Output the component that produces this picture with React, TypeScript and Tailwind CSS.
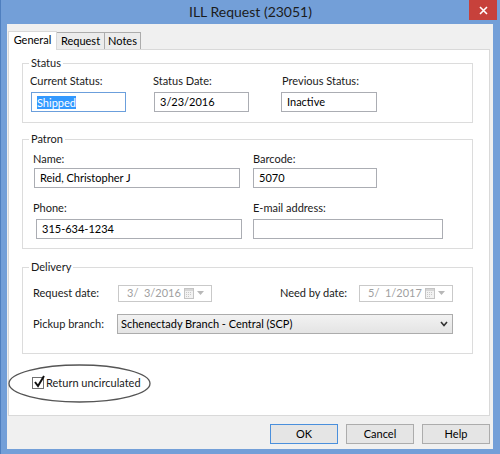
import React from "react";

const font = { fontFamily: 'Lato, "Noto Sans", sans-serif' };

function GroupBox({
  title,
  className,
  children,
}: {
  title: string;
  className: string;
  children: React.ReactNode;
}) {
  return (
    <div className={`relative border border-[#dcdcdc] ${className}`}>
      {/* legend sits over the top border */}
      <span className="absolute -top-[8px] left-[6px] bg-white px-[2px] text-[11px] leading-[14px] text-[#1a1a1a]">
        {title}
      </span>
      {children}
    </div>
  );
}

function TextBox({
  value,
  className,
  focused,
}: {
  value: string;
  className: string;
  focused?: boolean;
}) {
  return (
    <div
      className={`flex h-[20px] items-center border bg-white pl-[5px] text-[11px] text-black ${
        focused ? "border-[#6b9fdc]" : "border-[#abadb3]"
      } ${className}`}
    >
      {focused ? (
        <span className="bg-[#3399ff] leading-[13px] text-white">{value}</span>
      ) : (
        value
      )}
    </div>
  );
}

function DateBox({ value }: { value: string }) {
  return (
    <div className="flex h-[17px] w-[94px] items-center border border-[#c9c9c9] bg-white pl-[8px] pr-[7px] text-[11px] text-[#a0a0a0]">
      <span className="flex-1 whitespace-pre">{value}</span>
      <svg width="10" height="11" viewBox="0 0 10 11">
        <rect x="0.5" y="0.5" width="9" height="10" fill="#f2f2f2" stroke="#c4c4c4" />
        <rect x="1" y="1" width="8" height="2" fill="#d6d6d6" />
        <g fill="#c8c8c8">
          <rect x="2" y="4" width="1" height="1" />
          <rect x="4" y="4" width="1" height="1" />
          <rect x="6" y="4" width="1" height="1" />
          <rect x="2" y="6" width="1" height="1" />
          <rect x="4" y="6" width="1" height="1" />
          <rect x="6" y="6" width="1" height="1" />
          <rect x="2" y="8" width="1" height="1" />
          <rect x="4" y="8" width="1" height="1" />
        </g>
      </svg>
      <svg width="7" height="4" viewBox="0 0 7 4" className="ml-[3px]">
        <path d="M0 0 H7 L3.5 4 Z" fill="#b8b8b8" />
      </svg>
    </div>
  );
}

function Button({ label, primary }: { label: string; primary?: boolean }) {
  return (
    <div
      className={`flex h-[20px] w-[68px] items-center justify-center border bg-[#e5e5e5] text-[11px] text-black ${
        primary ? "border-[#4a8fdc]" : "border-[#acacac]"
      }`}
    >
      {label}
    </div>
  );
}

export default function App() {
  return (
    <div
      className="flex h-[454px] w-[500px] flex-col border-l border-[#4f7fbf] bg-[#739fd8]"
      style={font}
    >
      {/* title bar */}
      <div className="relative flex h-[24px] shrink-0 items-center justify-center">
        <span className="text-[14px] leading-[18px] text-[#1c1c1c]">
          ILL Request (23051)
        </span>
        <div className="absolute right-[3px] top-0 flex h-[20px] w-[28px] items-center justify-center bg-[#c7413b]">
          <svg width="9" height="9" viewBox="0 0 9 9">
            <path d="M1 1 L8 8 M8 1 L1 8" stroke="#fff" strokeWidth="1.6" />
          </svg>
        </div>
      </div>

      {/* dialog body */}
      <div className="ml-[6px] mr-[7px] flex h-[425px] shrink-0 flex-col bg-[#f0f0f0] pl-[1px] pr-[3px] pt-[7px]">
        {/* tabs */}
        <div className="flex h-[18px] items-end text-[11px] text-black">
          <div className="relative z-10 -mb-px flex h-[19px] w-[49px] items-center justify-center border border-b-0 border-[#d9d9d9] bg-white pb-[1px]">
            General
          </div>
          <div className="flex h-[17px] w-[48px] items-center justify-center border border-l-0 border-b-0 border-[#acacac] bg-[#ececec]">
            Request
          </div>
          <div className="flex h-[17px] w-[36px] items-center justify-center border border-l-0 border-b-0 border-[#acacac] bg-[#ececec]">
            Notes
          </div>
        </div>

        {/* tab panel */}
        <div className="flex h-[367px] flex-col border border-[#d9d9d9] bg-white pl-[13px] pr-[16px] pt-[13px]">
          {/* Status */}
          <GroupBox title="Status" className="h-[60px] pl-[7px] pt-[10px]">
            <div className="flex text-[11px] leading-[14px] text-[#1a1a1a]">
              <div className="w-[123px]">
                <div>Current Status:</div>
                <TextBox value="Shipped" focused className="ml-[1px] mt-[4px] w-[95px]" />
              </div>
              <div className="w-[129px]">
                <div>Status Date:</div>
                <TextBox value="3/23/2016" className="ml-[1px] mt-[4px] w-[95px]" />
              </div>
              <div>
                <div>Previous Status:</div>
                <TextBox value="Inactive" className="ml-[-1px] mt-[4px] w-[96px]" />
              </div>
            </div>
          </GroupBox>

          {/* Patron */}
          <GroupBox title="Patron" className="mt-[16px] h-[110px] pl-[10px] pt-[12px]">
            <div className="flex text-[11px] leading-[14px] text-[#1a1a1a]">
              <div className="w-[220px]">
                <div>Name:</div>
                <TextBox value="Reid, Christopher J" className="ml-[1px] mt-[2px] w-[206px]" />
                <div className="mt-[13px]">Phone:</div>
                <TextBox value="315-634-1234" className="ml-[3px] mt-[4px] w-[206px]" />
              </div>
              <div>
                <div>Barcode:</div>
                <TextBox value="5070" className="mt-[2px] w-[124px]" />
                <div className="mt-[13px]">E-mail address:</div>
                <TextBox value="" className="mt-[4px] w-[190px]" />
              </div>
            </div>
          </GroupBox>

          {/* Delivery */}
          <GroupBox title="Delivery" className="mt-[18px] h-[87px] pl-[10px] pt-[15px]">
            <div className="flex h-[20px] items-center text-[11px] text-[#1a1a1a]">
              <div className="w-[85px]">Request date:</div>
              <DateBox value="3/  3/2016" />
              <div className="ml-[68px] w-[79px]">Need by date:</div>
              <DateBox value="5/  1/2017" />
            </div>
            <div className="mt-[11px] flex h-[20px] items-center text-[11px] text-[#1a1a1a]">
              <div className="w-[84px]">Pickup branch:</div>
              <div className="flex h-[20px] w-[336px] items-center border border-[#acacac] bg-gradient-to-b from-[#f2f2f2] to-[#e4e4e4] pl-[3px] pr-[4px] text-black">
                <span className="flex-1">Schenectady Branch - Central (SCP)</span>
                <svg width="8" height="6" viewBox="0 0 8 6">
                  <path d="M1 1 L4 4.5 L7 1" fill="none" stroke="#333" strokeWidth="1.6" />
                </svg>
              </div>
            </div>
          </GroupBox>

          {/* Return uncirculated */}
          <div className="relative mt-[10px] flex h-[38px] items-center pl-[10px] text-[11px] text-[#1a1a1a]">
            <svg
              className="absolute left-[-14px] top-0"
              width="143"
              height="39"
              viewBox="0 0 143 39"
            >
              <ellipse cx="71.5" cy="19.5" rx="70.5" ry="18.5" fill="none" stroke="#555" strokeWidth="1.3" />
            </svg>
            <div className="relative flex h-[12px] w-[12px] items-center justify-center border border-[#707070] bg-white">
              <svg
                className="absolute -top-[3px] left-[0px]"
                width="12"
                height="13"
                viewBox="0 0 12 13"
              >
                <path d="M2 7 L5 11 L11 1" fill="none" stroke="#111" strokeWidth="2" />
              </svg>
            </div>
            <span className="relative ml-[2px]">Return uncirculated</span>
          </div>
        </div>

        {/* buttons */}
        <div className="mt-[8px] flex justify-end gap-[8px] pr-[0px]">
          <Button label="OK" primary />
          <Button label="Cancel" />
          <Button label="Help" />
        </div>
      </div>
    </div>
  );
}
